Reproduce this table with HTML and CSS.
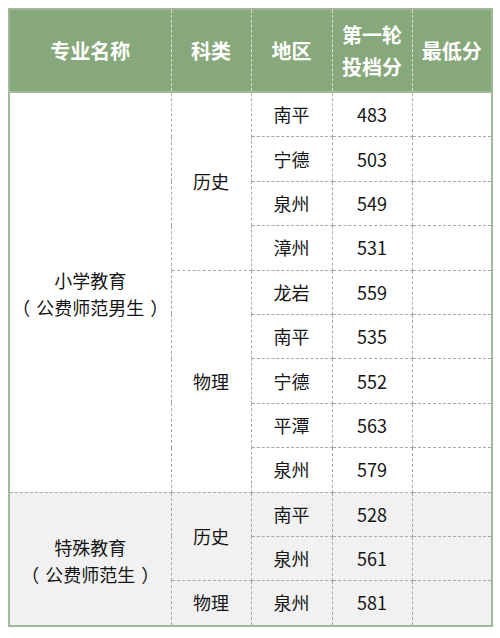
FILE: index.html
```html
<!DOCTYPE html>
<html lang="zh">
<head>
<meta charset="utf-8">
<link rel="stylesheet" href="styles.css">
</head>
<body>
<table class="score-table">
  <colgroup>
    <col class="c-major"><col class="c-sub"><col class="c-area"><col class="c-score"><col class="c-min">
  </colgroup>
  <thead>
    <tr class="head-row">
      <th>专业名称</th>
      <th>科类</th>
      <th>地区</th>
      <th>第一轮<br>投档分</th>
      <th>最低分</th>
    </tr>
  </thead>
  <tbody>
    <tr>
      <td class="major" rowspan="9">小学教育<br><span class="po">（</span>公费师范男生<span class="pc">）</span></td>
      <td rowspan="4">历史</td>
      <td>南平</td><td>483</td><td></td>
    </tr>
    <tr><td>宁德</td><td>503</td><td></td></tr>
    <tr><td>泉州</td><td>549</td><td></td></tr>
    <tr><td>漳州</td><td>531</td><td></td></tr>
    <tr>
      <td rowspan="5">物理</td>
      <td>龙岩</td><td>559</td><td></td>
    </tr>
    <tr><td>南平</td><td>535</td><td></td></tr>
    <tr><td>宁德</td><td>552</td><td></td></tr>
    <tr><td>平潭</td><td>563</td><td></td></tr>
    <tr><td>泉州</td><td>579</td><td></td></tr>
    <tr class="alt">
      <td class="major" rowspan="3">特殊教育<br><span class="po">（</span>公费师范生<span class="pc">）</span></td>
      <td rowspan="2">历史</td>
      <td>南平</td><td>528</td><td></td>
    </tr>
    <tr class="alt"><td>泉州</td><td>561</td><td></td></tr>
    <tr class="alt"><td>物理</td><td>泉州</td><td>581</td><td></td></tr>
  </tbody>
</table>
</body>
</html>
```

FILE: styles.css
```css
html, body {
  margin: 0;
  padding: 0;
  background: #ffffff;
}
body {
  padding: 8px 0 0 8px;
  font-family: "Noto Sans CJK SC", "Noto Sans", sans-serif;
  color: #151515;
}
.score-table {
  border-collapse: collapse;
  width: 483px;
  table-layout: fixed;
  border: 2px solid #a3b799;
}
.c-major { width: 162px; }
.c-sub { width: 80px; }
.c-area { width: 81px; }
.c-score { width: 80px; }
.c-min { width: 80px; }

.head-row th {
  background: #87a87a;
  color: #ffffff;
  font-weight: 700;
  font-size: 20px;
  line-height: 32px;
  height: 81px;
  padding: 0;
  text-align: center;
  vertical-align: middle;
  border-left: 1px dashed #d8e2d2;
  border-right: 1px dashed #d8e2d2;
  border-top: 2px solid #a3b799;
  border-bottom: 2px solid #a3b799;
}
.head-row th:first-child { border-left: 2px solid #a3b799; }
.head-row th:last-child { border-right: 2px solid #a3b799; }

tbody td {
  height: 43.4px;
  padding: 0;
  text-align: center;
  vertical-align: middle;
  font-size: 18px;
  line-height: 27px;
  border: 1px dashed #a9a9a9;
}
tbody td.major {
  border-left: 2px solid #a3b799;
  padding-top: 4px;
}
tbody tr td:last-child {
  border-right: 2px solid #a3b799;
}
tbody tr:last-child td {
  border-bottom: 2px solid #a3b799;
}
tr.alt td {
  background: #f1f1f1;
}
.po {
  display: inline-block;
  margin-left: -6px;
  margin-right: 6px;
}
.pc {
  display: inline-block;
  margin-left: 6px;
  margin-right: -6px;
}
```
